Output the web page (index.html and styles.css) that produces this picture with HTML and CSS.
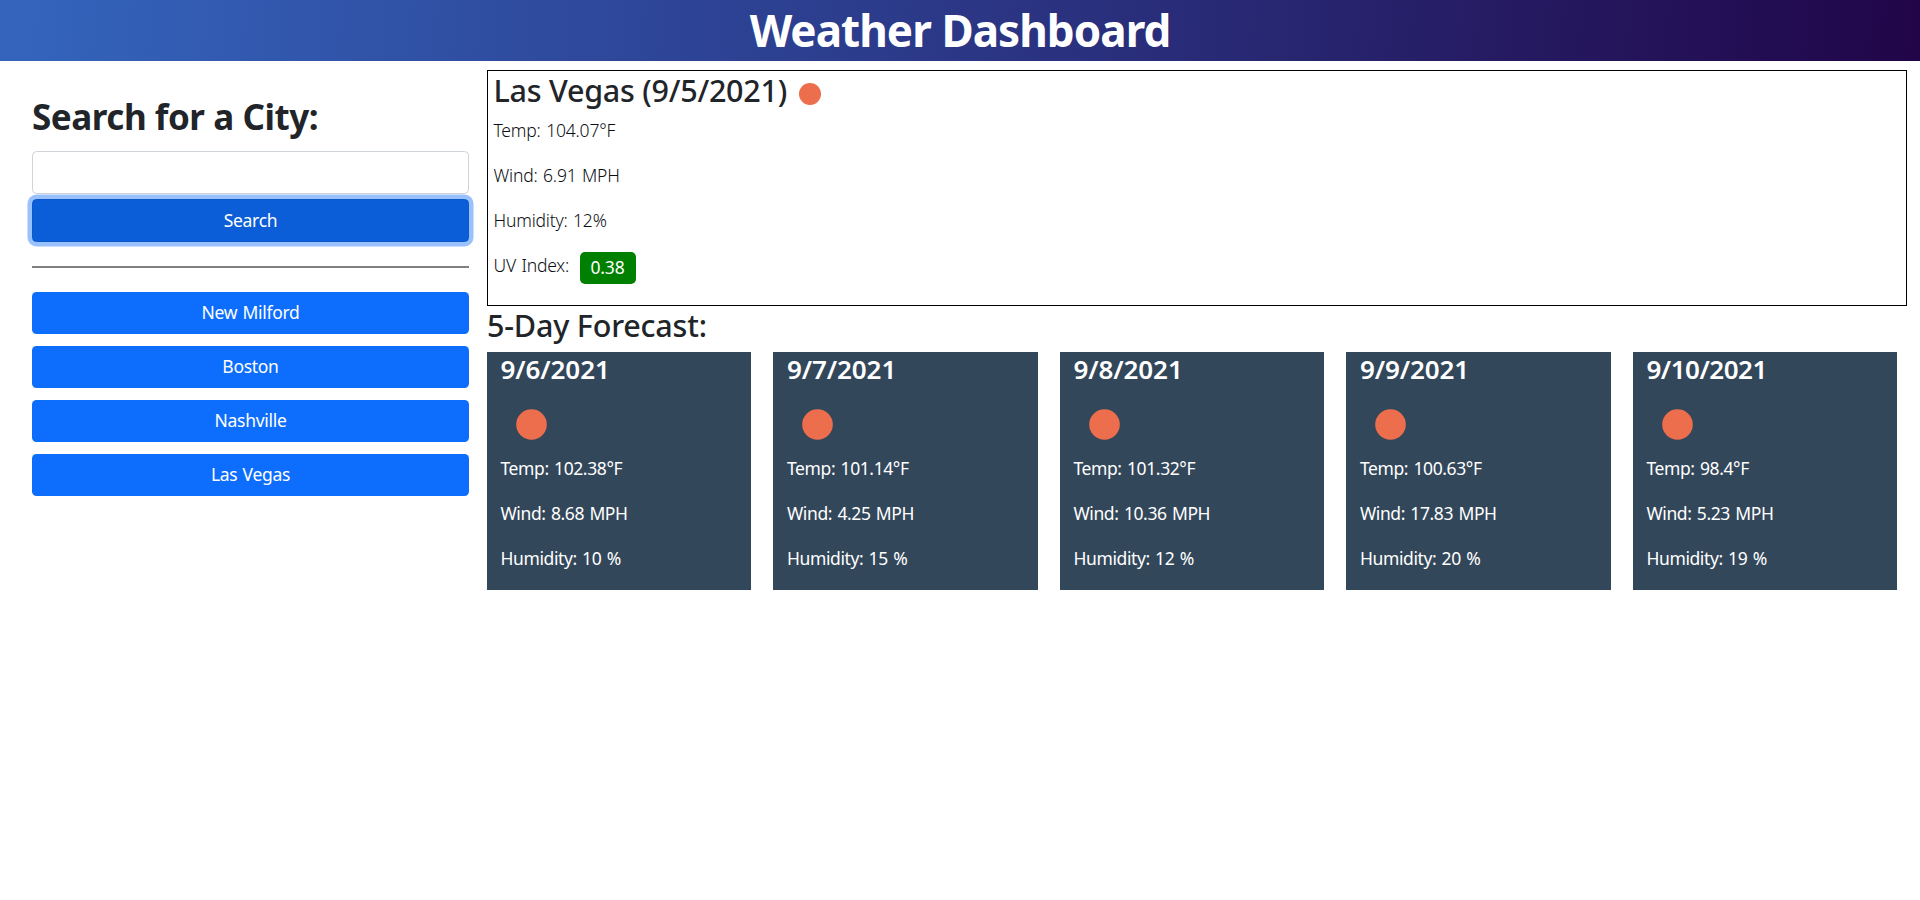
FILE: index.html
```html
<!DOCTYPE html>
<html lang="en">
<head>
<meta charset="utf-8">
<title>Weather Dashboard</title>
<link rel="stylesheet" href="styles.css">
</head>
<body>
<header class="header"><h1 class="header-title">Weather Dashboard</h1></header>
<main class="layout">
  <aside class="sidebar">
    <h2 class="search-title">Search for a City:</h2>
    <input class="search-input" type="text" aria-label="City">
    <button class="btn btn-search">Search</button>
    <hr class="divider">
    <div class="history">
      <button class="btn">New Milford</button>
      <button class="btn">Boston</button>
      <button class="btn">Nashville</button>
      <button class="btn">Las Vegas</button>
    </div>
  </aside>
  <section class="content">
    <div class="current">
      <h3 class="current-title"><span>Las Vegas (9/5/2021)</span><svg class="sun-small" viewBox="0 0 22 22"><circle cx="11" cy="11" r="11"/></svg></h3>
      <p class="line">Temp: 104.07°F</p>
      <p class="line">Wind: 6.91 MPH</p>
      <p class="line">Humidity: 12%</p>
      <p class="line uv"><span class="uv-label">UV Index:</span><span class="badge">0.38</span></p>
    </div>
    <h3 class="forecast-title">5-Day Forecast:</h3>
    <div class="forecast">
      <article class="card"><h4 class="date">9/6/2021</h4><svg class="sun" viewBox="0 0 31 31"><circle cx="15.5" cy="15.5" r="15.3"/></svg><p class="line">Temp: 102.38°F</p><p class="line">Wind: 8.68 MPH</p><p class="line">Humidity: 10 %</p></article>
      <article class="card"><h4 class="date">9/7/2021</h4><svg class="sun" viewBox="0 0 31 31"><circle cx="15.5" cy="15.5" r="15.3"/></svg><p class="line">Temp: 101.14°F</p><p class="line">Wind: 4.25 MPH</p><p class="line">Humidity: 15 %</p></article>
      <article class="card"><h4 class="date">9/8/2021</h4><svg class="sun" viewBox="0 0 31 31"><circle cx="15.5" cy="15.5" r="15.3"/></svg><p class="line">Temp: 101.32°F</p><p class="line">Wind: 10.36 MPH</p><p class="line">Humidity: 12 %</p></article>
      <article class="card"><h4 class="date">9/9/2021</h4><svg class="sun" viewBox="0 0 31 31"><circle cx="15.5" cy="15.5" r="15.3"/></svg><p class="line">Temp: 100.63°F</p><p class="line">Wind: 17.83 MPH</p><p class="line">Humidity: 20 %</p></article>
      <article class="card"><h4 class="date date-long">9/10/2021</h4><svg class="sun" viewBox="0 0 31 31"><circle cx="15.5" cy="15.5" r="15.3"/></svg><p class="line">Temp: 98.4°F</p><p class="line">Wind: 5.23 MPH</p><p class="line">Humidity: 19 %</p></article>
    </div>
  </section>
</main>
</body>
</html>
```
FILE: styles.css
```css
* { box-sizing: border-box; }
body {
  margin: 0;
  background: #fff;
  color: #212529;
  font-family: "Segoe UI", "Noto Sans", "Open Sans", sans-serif;
  font-size: 17.5px;
  line-height: 27px;
}
h1, h2, h3, h4, p { margin: 0; white-space: nowrap; }
.header {
  height: 61px;
  background: linear-gradient(95deg, #3465bd, #2c3c8c 45%, #210548);
  text-align: center;
}
.header-title {
  color: #fff;
  font-size: 44px;
  font-weight: 700;
  line-height: 61px;
  letter-spacing: -0.95px;
}
.layout { display: flex; }
.sidebar {
  width: 487px;
  padding: 34px 18px 0 32px;
}
.search-title {
  font-size: 35px;
  font-weight: 700;
  line-height: 43px;
  letter-spacing: -0.45px;
}
.search-input {
  display: block;
  width: 100%;
  height: 43px;
  margin-top: 13px;
  border: 1px solid #ced4da;
  border-radius: 4.5px;
  background: #fff;
}
.btn {
  display: block;
  width: 100%;
  height: 42px;
  padding: 0 0 1px;
  border: 0;
  border-radius: 4.5px;
  background: #0d6efd;
  color: #fff;
  font: inherit;
  letter-spacing: -0.3px;
  word-spacing: 1px;
}
.btn-search {
  height: 43px;
  margin-top: 5px;
  border: 1px solid #0a58ca;
  background: #0b5ed7;
  box-shadow: 0 0 0 4.5px rgba(49, 132, 253, 0.5);
}
.divider {
  height: 2px;
  margin: 24px 0;
  border: 0;
  background: #808080;
}
.history { display: grid; gap: 12px; }
.content { width: 1420px; padding-top: 9px; }
.current {
  height: 236px;
  padding: 0 0 0 5.5px;
  border: 1px solid #000;
}
.current-title {
  display: flex;
  align-items: center;
  gap: 12px;
  height: 39px;
  margin-bottom: 7px;
  font-size: 30.5px;
  font-weight: 500;
  letter-spacing: -0.25px;
}
.sun, .sun-small { display: block; fill: #ec6e4c; }
.sun-small { width: 22px; height: 22px; margin-top: 6px; }
.line { margin-bottom: 18px; letter-spacing: -0.4px; word-spacing: 1.2px; }
.current .line { color: #0c0f12; font-weight: 300; letter-spacing: -0.2px; }
.uv { display: flex; gap: 11px; }
.current .badge {
  width: 56px;
  height: 32px;
  border-radius: 5px;
  background: #008000;
  color: #fff;
  font-weight: 400;
  line-height: 31px;
  text-align: center;
}
.uv-label { width: 75px; }
.forecast-title {
  height: 46px;
  font-size: 30.5px;
  font-weight: 500;
  line-height: 39px;
  letter-spacing: -0.2px;
}
.forecast {
  display: grid;
  grid-template-columns: repeat(5, 264.4px);
  gap: 22.1px;
}
.card {
  height: 238px;
  padding: 1px 0 0 13.5px;
  background: #33475b;
  color: #fff;
}
.date {
  font-size: 26px;
  font-weight: 600;
  line-height: 32px;
  letter-spacing: -0.1px;
}
.date-long { letter-spacing: -0.5px; }
.sun { width: 31px; height: 31px; margin: 24px 0 15px 15.5px; }
```
